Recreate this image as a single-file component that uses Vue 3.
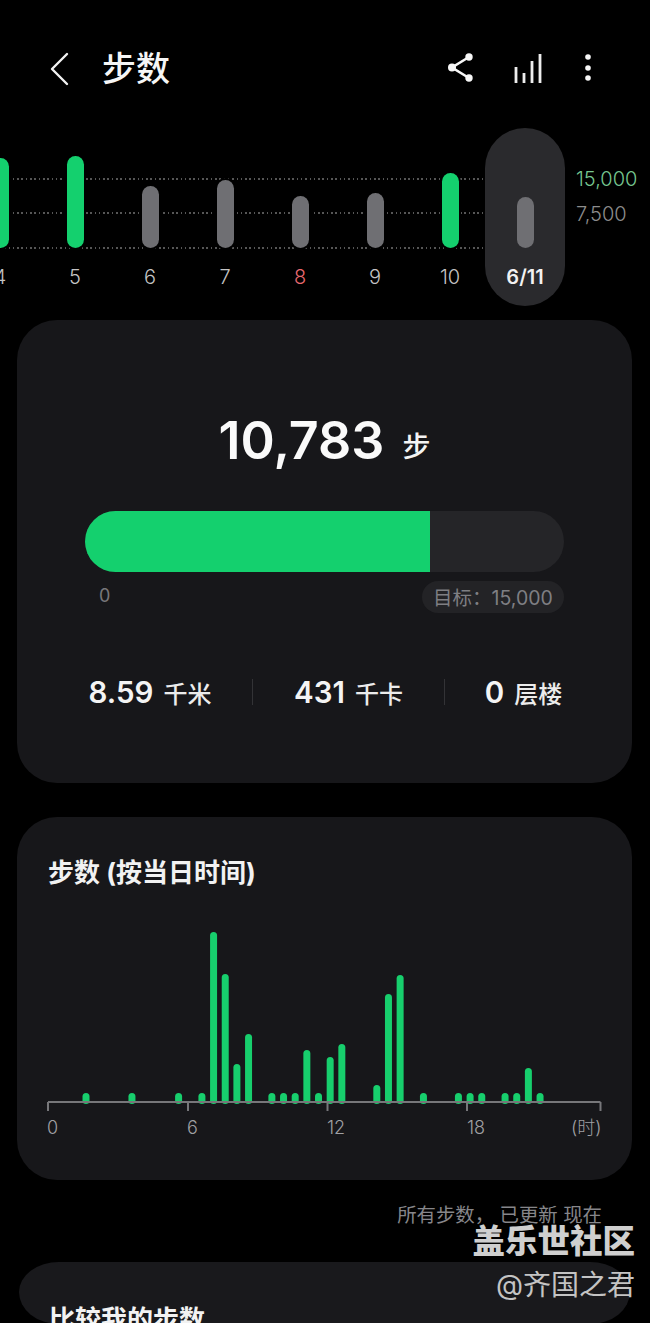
<script setup>
const days = [
  { label: '4', h: 90, color: 'green' },
  { label: '5', h: 92, color: 'green' },
  { label: '6', h: 62, color: 'gray' },
  { label: '7', h: 68, color: 'gray' },
  { label: '8', h: 52, color: 'gray', red: true },
  { label: '9', h: 55, color: 'gray' },
  { label: '10', h: 75, color: 'green' },
  { label: '6/11', h: 51, color: 'gray', selected: true }
]
const slots = [
  [3.26, 9], [7.2, 9], [11.2, 9], [13.2, 9], [14.2, 170], [15.2, 128], [16.2, 38], [17.2, 68],
  [19.2, 9], [20.2, 9], [21.2, 9], [22.2, 52], [23.2, 9], [24.2, 45], [25.2, 58],
  [28.2, 17], [29.2, 108], [30.2, 127], [32.2, 9], [35.2, 9], [36.2, 9], [37.2, 9],
  [39.2, 9], [40.2, 9], [41.2, 34], [42.2, 9]
]
const base = 177
const bars = slots.map(([i, h]) => ({ x: 1 + i * 11.66 - 3.5, y: base - h, h: h + 2 }))
const ticks = [1, 141, 280.5, 420, 553.5]
</script>

<template>
  <div class="screen">
    <header class="topbar">
      <svg class="back" width="20" height="34" viewBox="0 0 20 34" fill="none">
        <path d="M18 2 L3 17 L18 32" stroke="#f2f2f2" stroke-width="2.4" stroke-linecap="round" stroke-linejoin="round" />
      </svg>
      <h1 class="title">步数</h1>
      <div class="actions">
        <svg width="26" height="32" viewBox="0 0 26 32" fill="none">
          <path d="M22 4 L5 14.500 L22 25" stroke="#f7f7f7" stroke-width="2.6" />
          <circle cx="22" cy="4" r="3.7" fill="#f7f7f7" />
          <circle cx="5" cy="14.500" r="4" fill="#f7f7f7" />
          <circle cx="22" cy="25" r="3.7" fill="#f7f7f7" />
        </svg>
        <svg width="31" height="32" viewBox="0 0 31 32" fill="none">
          <path d="M3 30V14M11 30V20M19 30V8M27 30V1" stroke="#ededed" stroke-width="2.8" />
        </svg>
        <svg width="8" height="32" viewBox="0 0 8 32">
          <circle cx="4" cy="4" r="2.8" fill="#f7f7f7" />
          <circle cx="4" cy="15" r="2.8" fill="#f7f7f7" />
          <circle cx="4" cy="25" r="2.8" fill="#f7f7f7" />
        </svg>
      </div>
    </header>

    <section class="trend">
      <i class="dots dots-a"></i>
      <i class="dots dots-b"></i>
      <i class="dots dots-c"></i>
      <div class="days">
        <div v-for="d in days" :key="d.label" class="day" :class="{ selected: d.selected }">
          <div class="day-plot">
            <span class="day-bar" :class="d.color" :style="{ height: d.h + 'px' }"></span>
          </div>
          <span class="day-label" :class="{ red: d.red }">{{ d.label }}</span>
        </div>
      </div>
      <div class="scale">
        <span class="scale-goal">15,000</span>
        <span>7,500</span>
      </div>
    </section>

    <section class="card summary">
      <div class="total"><strong>10,783</strong><span>步</span></div>
      <div class="progress"><div class="progress-fill"></div></div>
      <div class="progress-meta">
        <span class="zero">0</span>
        <span class="goal">目标：15,000</span>
      </div>
      <div class="stats">
        <div class="stat"><b>8.59</b><span>千米</span></div>
        <div class="stat"><b>431</b><span>千卡</span></div>
        <div class="stat"><b>0</b><span>层楼</span></div>
      </div>
    </section>

    <section class="card hourly">
      <h2 class="card-title">步数 (按当日时间)</h2>
      <svg class="hour-chart" width="556" height="187" viewBox="0 0 556 187">
        <rect v-for="(b, n) in bars" :key="n" :x="b.x" :y="b.y" width="7" :height="b.h" rx="3.5" fill="#17cf6d" />
        <path d="M1 177H553.500" stroke="#77777a" stroke-width="2" />
        <path v-for="t in ticks" :key="t" :d="`M${t} 177V186`" stroke="#77777a" stroke-width="2" />
      </svg>
      <div class="hour-labels">
        <span>0</span><span>6</span><span>12</span><span>18</span><span class="unit">(时)</span>
      </div>
    </section>

    <p class="note">所有步数， 已更新 现在</p>

    <section class="compare">
      <h2 class="card-title">比较我的步数</h2>
    </section>

    <div class="watermark">
      <b>盖乐世社区</b>
      <span>@齐国之君</span>
    </div>
  </div>
</template>

<style scoped>
.screen {
  position: relative;
  width: 650px;
  height: 1323px;
  overflow: hidden;
  background: #000;
  color: #fff;
  font-family: Inter, "Noto Sans CJK SC", sans-serif;
}
.topbar {
  display: flex;
  align-items: center;
  height: 118px;
  padding: 10px 0 0 49px;
  box-sizing: content-box;
}
.back { flex: none; overflow: visible; }
.title {
  margin: 0 0 0 33px;
  font-size: 34px;
  font-weight: 500;
  line-height: 40px;
  color: #f6f6f6;
}
.actions {
  display: flex;
  align-items: center;
  gap: 40px;
  margin-left: auto;
  margin-right: 58px;
}
.trend {
  position: relative;
  height: 178px;
}
.dots {
  position: absolute;
  left: 0;
  width: 485px;
  height: 2px;
  background: repeating-linear-gradient(90deg, #565656 0 1.500px, transparent 1.500px 4.300px);
}
.dots-a { top: 49.500px; }
.dots-b { top: 84px; }
.dots-c { top: 118.500px; }
.days {
  position: relative;
  display: flex;
  margin-left: -37.500px;
}
.day {
  display: flex;
  flex-direction: column;
  align-items: center;
  width: 75px;
  height: 178px;
}
.day.selected {
  width: 80px;
  margin-left: -2.500px;
  border-radius: 40px;
  background: #2a2a2d;
}
.day-plot {
  display: flex;
  align-items: flex-end;
  height: 120px;
}
.day-bar {
  display: block;
  width: 17px;
  border-radius: 8.500px;
  box-shadow: 0 0 0 2px #000;
}
.selected .day-bar { box-shadow: none; }
.day-bar.green { background: #14d06e; }
.day-bar.gray { background: #6f6f73; }
.day-label {
  margin-top: 16px;
  font-size: 20px;
  line-height: 26px;
  font-weight: 300;
  color: #c4c4c4;
}
.day-label.red { color: #e8696f; }
.selected .day-label {
  font-weight: 600;
  color: #f2f2f2;
}
.scale {
  position: absolute;
  left: 576px;
  top: 37px;
  display: flex;
  flex-direction: column;
  font-size: 20px;
  font-weight: 300;
  line-height: 28px;
  gap: 6.500px;
  color: #8c8c8c;
}
.scale-goal { color: #76c690; }
.card {
  box-sizing: border-box;
  width: 615px;
  margin-left: 17px;
  border-radius: 40px;
  background: #17171a;
}
.summary {
  height: 463px;
  margin-top: 14px;
  padding: 90px 68px 0;
}
.total {
  display: flex;
  align-items: baseline;
  justify-content: center;
  gap: 18px;
  height: 62px;
  line-height: 62px;
}
.total strong {
  font-size: 52px;
  font-weight: 600;
  color: #fafafa;
}
.total span {
  font-size: 28px;
  font-weight: 500;
  position: relative;
  top: -2px;
  color: #f4f4f4;
}
.progress {
  height: 61px;
  margin-top: 39px;
  border-radius: 31px;
  overflow: hidden;
  background: #252528;
}
.progress-fill {
  width: 345px;
  height: 100%;
  background: #14d06e;
}
.progress-meta {
  display: flex;
  justify-content: space-between;
  align-items: flex-start;
  margin-top: 9px;
}
.zero {
  margin-left: 14px;
  font-size: 18px;
  line-height: 30px;
  color: #77777b;
}
.goal {
  box-sizing: border-box;
  width: 142px;
  height: 32px;
  border-radius: 16px;
  background: #232326;
  font-size: 19.500px;
  line-height: 34px;
  text-align: center;
  white-space: nowrap;
  color: #7f7f83;
}
.stats {
  display: grid;
  grid-template-columns: 204px 192px 158px;
  margin: 66px 0 0 -37px;
}
.stat {
  display: flex;
  align-items: center;
  justify-content: center;
  gap: 10px;
  height: 26px;
  border-left: 1px solid #333336;
}
.stat:first-child { border-left: 0; }
.stat b {
  font-size: 29.500px;
  font-weight: 600;
  color: #f4f4f4;
}
.stat span {
  font-size: 24px;
  font-weight: 500;
  color: #ececec;
}
.hourly {
  height: 363px;
  margin-top: 34px;
  padding: 39px 0 0 31px;
}
.card-title {
  margin: 0;
  font-size: 26px;
  line-height: 34px;
  font-weight: 700;
  color: #f2f2f2;
}
.hour-chart {
  display: block;
  margin: 35px 0 0 -1px;
}
.hour-labels {
  display: flex;
  margin: 3px 0 0 -1px;
  font-size: 18px;
  line-height: 26px;
  font-weight: 300;
  color: #a0a0a4;
}
.hour-labels span {
  width: 140px;
  flex: none;
}
.hour-labels .unit {
  width: auto;
  margin-left: -36px;
}
.note {
  margin: 22px 48px 0 0;
  font-size: 19.400px;
  line-height: 26px;
  text-align: right;
  white-space: pre;
  color: #86868a;
}
.compare {
  box-sizing: border-box;
  width: 611px;
  height: 62px;
  margin: 34px 0 0 19px;
  padding: 41px 0 0 30px;
  border-radius: 40px / 30px 30px 32px 32px;
  background: #19191c;
}
.watermark {
  position: absolute;
  right: 15px;
  top: 1222px;
  display: flex;
  flex-direction: column;
  align-items: flex-end;
  color: #cfcfcf;
}
.watermark b {
  font-size: 32.500px;
  font-weight: 900;
  line-height: 40px;
}
.watermark span {
  margin-top: 3px;
  font-size: 28px;
  line-height: 40px;
  font-weight: 400;
  color: #c4c4c4;
}
</style>

<style>
body { background: #000; }
</style>
